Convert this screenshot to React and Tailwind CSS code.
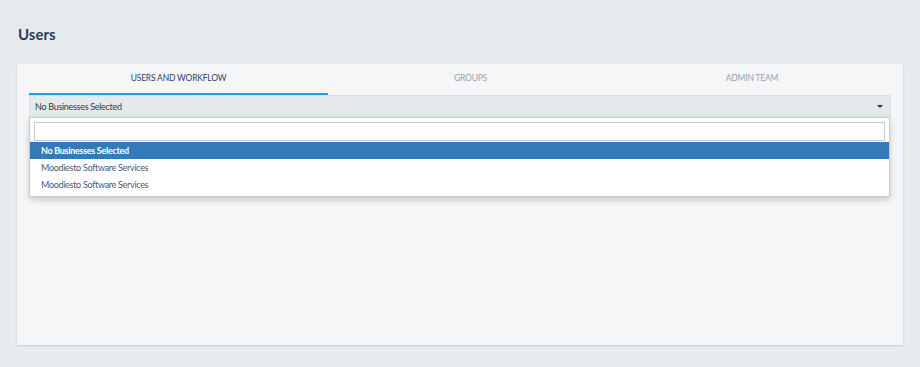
export default function App() {
  const font = { fontFamily: '"Lato", "Open Sans", sans-serif' };
  return (
    <div className="w-[920px] h-[367px] bg-[#e8ebee] overflow-hidden" style={font}>
      <div className="pt-[26px] pl-[18px] h-[64px]">
        <h1 className="text-[15px] font-bold text-[#2b3a55] leading-[16px]">Users</h1>
      </div>
      <div className="mx-[17px] w-[886px] h-[281px] bg-[#f5f6f8] px-[12px] shadow-[0_1px_2px_rgba(0,0,0,0.12)]">
        <div className="flex h-[32px] border-b border-[#dcdfe3]">
          <div className="w-[299px] flex flex-col">
            <div className="flex-1 flex items-center justify-center text-[8.5px] text-[#34445e] tracking-[-0.2px]">USERS AND WORKFLOW</div>
            <div className="h-[2px] bg-[#1a9cf0]"></div>
          </div>
          <div className="w-[285px] flex items-center justify-center text-[8.5px] tracking-[-0.2px] text-[#98a1b0] pb-[2px]">GROUPS</div>
          <div className="flex-1 flex items-center justify-center text-[8.5px] tracking-[-0.2px] text-[#98a1b0] pb-[2px]">ADMIN TEAM</div>
        </div>
        <div className="relative">
          <div className="h-[21px] bg-[#e6e9ec] border-x border-[#dde0e4] flex items-center justify-between pl-[5px] pr-[7px]">
            <span className="text-[9px] tracking-[-0.3px] text-[#333a44]">No Businesses Selected</span>
            <span className="w-0 h-0 border-l-[3px] border-r-[3px] border-t-[3px] border-l-transparent border-r-transparent border-t-[#333]"></span>
          </div>
          <div className="absolute left-0 top-[21px] w-[861px] bg-white border border-[#c9ccd1] shadow-[0_3px_6px_rgba(0,0,0,0.18)] pb-[3px]">
            <div className="px-[4px] pt-[4px] pb-[1px]">
              <div className="h-[19px] border border-[#c5c9ce] bg-white"></div>
            </div>
            <div className="h-[17px] bg-[#337ab7] flex items-center pl-[11px] text-[9px] tracking-[-0.3px] text-white font-bold">No Businesses Selected</div>
            <div className="h-[17px] flex items-center pl-[11px] text-[9px] tracking-[-0.3px] text-[#4a5873]">Moodiesto Software Services</div>
            <div className="h-[17px] flex items-center pl-[11px] text-[9px] tracking-[-0.3px] text-[#4a5873]">Moodiesto Software Services</div>
          </div>
        </div>
      </div>
    </div>
  );
}
